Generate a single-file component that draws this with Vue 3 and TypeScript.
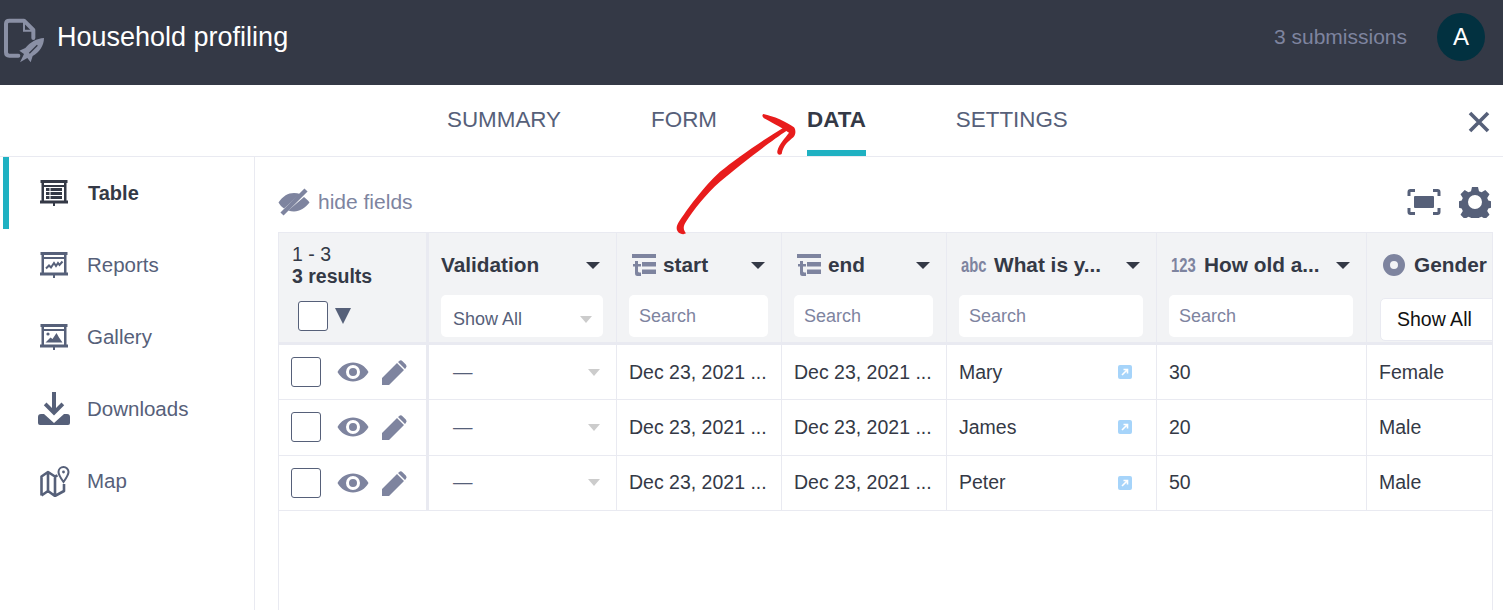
<script setup lang="ts">
const navItems = ['Table', 'Reports', 'Gallery', 'Downloads', 'Map']
const tabs = ['SUMMARY', 'FORM', 'DATA', 'SETTINGS']
const rows = [
  { name: 'Mary', age: '30', gender: 'Female' },
  { name: 'James', age: '20', gender: 'Male' },
  { name: 'Peter', age: '50', gender: 'Male' },
]
</script>

<template>
  <div class="page">
    <header class="topbar">
      <div class="brand">
        <svg class="doc" width="50" height="66" viewBox="0 10 150 198">
          <path d="M55 165H28Q18 165 18 155V70Q18 60 28 60H72L100 88V112" fill="none" stroke="#8a90a5" stroke-width="12" stroke-linejoin="round" stroke-linecap="round"/>
          <path d="M72 60V90H100" fill="none" stroke="#8a90a5" stroke-width="6"/>
          <path d="M132 112C132 135 118 155 98 166L92 185 82 172 60 185 72 160 58 150 76 142C90 125 110 113 132 112Z" fill="#8a90a5"/>
          <path d="M112 134 88 158" stroke="#343946" stroke-width="4" fill="none"/>
        </svg>
        <span class="title">Household profiling</span>
      </div>
      <div class="top-right">
        <span class="subs">3 submissions</span>
        <span class="avatar">A</span>
      </div>
    </header>

    <nav class="tabs">
      <a v-for="t in tabs" :key="t" class="tab" :class="{ on: t === 'DATA' }">{{ t }}</a>
      <svg class="close" width="22" height="22" viewBox="0 0 22 22">
        <path d="M2 2l18 18M20 2L2 20" stroke="#566079" stroke-width="3.600" fill="none"/>
      </svg>
    </nav>

    <div class="main">
      <aside class="side">
        <div v-for="n in navItems" :key="n" class="nav" :class="{ active: n === 'Table' }">
          <span class="nav-ic">
            <svg v-if="n === 'Table'" width="28" height="26" viewBox="0 0 28 26">
              <g fill="#343946">
                <path d="M0.500 0h27v3H.5zM0 20.500h28V23.500H0zM13 23h2v3h-2zM1.500 3h2.500v18H1.500zM24 3h2.500v18H24zM1.500 5h25v2h-25z"/>
                <path d="M6 8h3.500v3H6zM10.500 8H22v3H10.500zM6 12h3.500v3H6zM10.500 12H22v3H10.500zM6 16h3.500v3H6zM10.500 16H22v3H10.500z"/>
              </g>
            </svg>
            <svg v-else-if="n === 'Reports'" width="28" height="26" viewBox="0 0 28 26">
              <path fill="#566079" d="M0.500 0h27v3H.5zM0 20.500h28V23.500H0zM13 23h2v3h-2zM1.500 3h2.500v18H1.500zM24 3h2.500v18H24zM1.500 5h25v2h-25z"/>
              <path d="M6 16.500l3-3 2 2 3-4.500 2 3 2-3 1.500 2 3-3.500" fill="none" stroke="#566079" stroke-width="2"/>
            </svg>
            <svg v-else-if="n === 'Gallery'" width="28" height="26" viewBox="0 0 28 26">
              <path fill="#566079" d="M0.500 0h27v3H.5zM0 20.500h28V23.500H0zM13 23h2v3h-2zM1.500 3h2.500v18H1.500zM24 3h2.500v18H24zM1.500 5h25v2h-25z"/>
              <circle cx="8" cy="10" r="1.600" fill="#566079"/>
              <path d="M5.500 18.500l5-5 2 1.500 4-6 2.500 4.500 3.500 5z" fill="#566079"/>
            </svg>
            <svg v-else-if="n === 'Downloads'" class="dl" width="32" height="34" viewBox="0 0 32 34">
              <path d="M14 0h4v16l5.500-5.500 2.700 2.700L16 23.500 5.800 13.200l2.700-2.700L14 16z" fill="#566079"/>
              <path d="M3 22h3l10 9 10-9h3a3 3 0 0 1 3 3v6a2 2 0 0 1-2 2H2a2 2 0 0 1-2-2v-6a3 3 0 0 1 3-3z" fill="#566079"/>
            </svg>
            <svg v-else width="30" height="31" viewBox="0 0 30 31">
              <path d="M1.500 29.500V10.500L8 6l7 4.500 2.500-1.200M24 18v7l-9 5-7-5-6.500 4.500M8 6v19M15 10.500V30" fill="none" stroke="#566079" stroke-width="2.600" stroke-linejoin="round"/>
              <path d="M23.500 1a5 5 0 0 1 5 5c0 3-5 10-5 10s-5-7-5-10a5 5 0 0 1 5-5z" fill="#fff" stroke="#566079" stroke-width="2"/>
              <circle cx="23.500" cy="6" r="1.400" fill="#566079"/>
            </svg>
          </span>
          <span>{{ n }}</span>
        </div>
      </aside>

      <section class="content">
        <div class="tools">
          <div class="hide">
            <svg width="32" height="28" viewBox="0 0 32 28">
              <path d="M0.500 14.500C5 8 10 5 16 5c2.200 0 4.200 .4 6 1L6 20.500C3.800 19 2 17 .5 14.500zM26 9c2 1.400 3.800 3.200 5.500 5.500C27 20 22 23.500 16 23.500c-2 0-4-.4-5.800-1z" fill="#7e849f"/>
              <path d="M4 26L28 2" stroke="#7e849f" stroke-width="4.500" fill="none"/>
            </svg>
            <span>hide fields</span>
          </div>
          <div class="tool-icons">
            <svg width="34" height="28" viewBox="0 0 34 28">
              <path d="M8 2.500H3.500a1.500 1.500 0 0 0-1.500 1.500v4M26 2.500h4.500A1.500 1.500 0 0 1 32 4v4M8 25.500H3.500A1.500 1.500 0 0 1 2 24v-4M26 25.500h4.500a1.500 1.500 0 0 0 1.500-1.500v-4" fill="none" stroke="#566079" stroke-width="3"/>
              <rect x="7" y="8" width="20" height="12" rx="1" fill="#566079"/>
            </svg>
            <svg width="32" height="32" viewBox="0 0 32 32">
              <path fill="#566079" fill-rule="evenodd" d="M13 1h6l1 4.200 2.600 1.100 3.700-2.300 4.200 4.200-2.300 3.700 1.100 2.600 4.200 1v6l-4.200 1-1.100 2.600 2.300 3.700-4.200 4.200-3.700-2.300-2.600 1.100-1 4.200h-6l-1-4.200-2.600-1.100-3.700 2.300-4.200-4.200 2.300-3.700-1.100-2.600-4.200-1v-6l4.200-1 1.100-2.600-2.300-3.700 4.200-4.200 3.700 2.300 2.600-1.100zM16 9a7 7 0 1 0 0 14 7 7 0 0 0 0-14z"/>
            </svg>
          </div>
        </div>

        <div class="table">
          <div class="row head">
            <div class="cell first h">
              <div class="count">1 - 3<br /><b>3 results</b></div>
              <div class="selall"><span class="box"></span><span class="down-big"></span></div>
            </div>
            <div class="cell h">
              <div class="hd"><span class="hname">Validation</span><i class="car"></i></div>
              <div class="select"><span>Show All</span><i class="car light"></i></div>
            </div>
            <div class="cell h" v-for="c in ['start', 'end']" :key="c">
              <div class="hd">
                <svg class="t-ic" width="24" height="23" viewBox="0 0 24 23">
                  <path d="M0 0h24v4H0zM10 8h14v4.500H10zM10 15.500h14V20H10zM3 7h3v3h3v2.500H6V17c0 1 .5 1.500 3 1.500V22H5.500C3.500 22 3 21 3 19v-6.500H1V10h2z" fill="#7e849f"/>
                </svg>
                <span class="hname">{{ c }}</span><i class="car"></i>
              </div>
              <div class="search">Search</div>
            </div>
            <div class="cell h">
              <div class="hd"><span class="ty">abc</span><span class="hname">What is y...</span><i class="car"></i></div>
              <div class="search">Search</div>
            </div>
            <div class="cell h">
              <div class="hd"><span class="ty">123</span><span class="hname">How old a...</span><i class="car"></i></div>
              <div class="search">Search</div>
            </div>
            <div class="cell h last">
              <div class="hd">
                <svg class="radio" width="22" height="22" viewBox="0 0 22 22"><circle cx="11" cy="11" r="7.500" fill="none" stroke="#7e849f" stroke-width="7"/></svg>
                <span class="hname">Gender</span>
              </div>
              <div class="show">Show All</div>
            </div>
          </div>

          <div v-for="r in rows" :key="r.name" class="row body">
            <div class="cell first actions">
              <span class="box"></span>
              <svg width="32" height="20" viewBox="0 0 32 20">
                <path fill="#7e849f" fill-rule="evenodd" d="M0.500 10C4 4 9.500 0.500 16 0.500S28 4 31.500 10C28 16 22.500 19.500 16 19.500S4 16 .5 10zM16 3a7 7 0 1 0 0 14 7 7 0 0 0 0-14zM16 6a4 4 0 1 1 0 8 4 4 0 0 1 0-8z"/>
              </svg>
              <svg class="pen" width="28" height="28" viewBox="0 0 28 28">
                <path fill="#7e849f" d="M1 20L16 5l7 7L8 27H1zM18 3.200a2.500 2.500 0 0 1 3.500 0l3.300 3.300a2.500 2.500 0 0 1 0 3.500L24 11l-7-7z"/>
              </svg>
            </div>
            <div class="cell dash"><span>—</span><i class="car light"></i></div>
            <div class="cell">Dec 23, 2021 ...</div>
            <div class="cell">Dec 23, 2021 ...</div>
            <div class="cell name">
              <span>{{ r.name }}</span>
              <svg width="14" height="14" viewBox="0 0 14 14">
                <rect width="14" height="14" rx="2" fill="#a6d4fa"/>
                <path d="M4 10l5-5M5.500 4.500H9.500V8.500" stroke="#fff" stroke-width="1.600" fill="none"/>
              </svg>
            </div>
            <div class="cell">{{ r.age }}</div>
            <div class="cell last">{{ r.gender }}</div>
          </div>
        </div>

        <svg class="arrow" width="360" height="260" viewBox="0 0 1080 780">
          <path d="M190 433C170 430 165 415 175 398 200 360 250 290 300 245 350 205 420 155 495 110L500 122C450 155 360 225 300 275 260 310 220 360 198 395 188 410 190 420 198 430Z" fill="#e81c1c"/>
          <path d="M430 72C460 78 500 95 522 112 528 120 528 135 520 142 505 155 490 165 485 192 478 198 470 192 472 183 478 160 495 145 507 128 480 110 450 95 432 85 426 80 426 74 430 72Z" fill="#e81c1c"/>
        </svg>
      </section>
    </div>
  </div>
</template>

<style scoped>
.page {
  width: 1503px;
  height: 610px;
  overflow: hidden;
  background: #fff;
  font-family: "Liberation Sans", Arial, sans-serif;
  color: #343946;
}
.topbar {
  height: 85px;
  background: #343946;
  display: flex;
  align-items: center;
  justify-content: space-between;
  padding: 0 18px 12px 0;
  box-sizing: border-box;
}
.brand { display: flex; align-items: center; }
.doc { margin-right: 7px; flex: none; }
.title { color: #fff; font-size: 27px; margin-top: 2px; }
.top-right { display: flex; align-items: center; gap: 30px; }
.subs { color: #7e849f; font-size: 21px; }
.avatar {
  width: 48px;
  height: 48px;
  border-radius: 50%;
  background: #023140;
  color: #fff;
  font-size: 24px;
  display: flex;
  align-items: center;
  justify-content: center;
}
.tabs {
  position: relative;
  height: 72px;
  box-sizing: border-box;
  border-bottom: 1px solid #e9eaf1;
  display: flex;
  padding-left: 447px;
  gap: 90px;
}
.tab {
  color: #566079;
  font-size: 22.400px;
  height: 71px;
  padding-top: 22px;
  box-sizing: border-box;
}
.tab.on {
  color: #343946;
  font-weight: 700;
  border-bottom: 6px solid #1fb1c2;
}
.close { position: absolute; right: 13px; top: 26px; }
.main { display: flex; height: 453px; }
.side {
  width: 255px;
  box-sizing: border-box;
  border-right: 1px solid #e9eaf1;
  padding-left: 3px;
  flex: none;
}
.nav {
  height: 72px;
  display: flex;
  align-items: center;
  font-size: 20.500px;
  color: #566079;
  padding-left: 6px;
}
.nav.active {
  color: #343946;
  font-weight: 700;
  font-size: 20px;
  box-shadow: inset 6px 0 0 #1fb1c2;
}
.nav.active span + span { margin-left: 1px; }
.nav-ic {
  width: 78px;
  display: flex;
  justify-content: flex-start;
  padding-left: 31px;
  box-sizing: border-box;
}
.dl { margin-left: -2px; }
.content {
  flex: 1;
  position: relative;
  padding: 0 10px 0 23px;
  min-width: 0;
}
.tools {
  height: 75px;
  display: flex;
  align-items: center;
  justify-content: space-between;
  padding-top: 14px;
  box-sizing: border-box;
}
.hide { display: flex; align-items: center; gap: 8px; color: #7e849f; font-size: 21px; }
.tool-icons { display: flex; align-items: center; gap: 18px; margin-right: 2px; }
.table {
  border: 1px solid #e9eaf1;
  height: 400px;
  overflow: hidden;
}
.row {
  display: grid;
  grid-template-columns: 150px 188px 165px 165px 210px 210px 1fr;
}
.head {
  height: 112px;
  background: #f2f3f5;
  border-bottom: 3px solid #e9eaf1;
  box-sizing: border-box;
}
.body {
  height: 55.330px;
  border-bottom: 1px solid #e9eaf1;
  box-sizing: border-box;
}
.cell {
  border-right: 1px solid #e9eaf1;
  font-size: 19.500px;
  padding: 0 12px;
  display: flex;
  align-items: center;
  box-sizing: border-box;
  min-width: 0;
  white-space: nowrap;
  color: #343946;
}
.cell.first { border-right-width: 3px; }
.cell.last { border-right: 0; }
.h {
  flex-direction: column;
  align-items: stretch;
  padding: 16px 16px 0 12px;
  overflow: hidden;
}
.first.h { padding-left: 13px; padding-top: 10px; padding-right: 0; }
.count { font-size: 19.500px; line-height: 22px; height: 57px; }
.count b { font-size: 19.500px; }
.selall { display: flex; align-items: center; padding-left: 6px; gap: 7px; margin-top: 1px; }
.box {
  display: block;
  width: 30px;
  height: 30px;
  box-sizing: border-box;
  border: 1px solid #566079;
  border-radius: 3px;
  background: #fff;
  flex: none;
}
.down-big {
  width: 0;
  height: 0;
  border-left: 8px solid transparent;
  border-right: 8px solid transparent;
  border-top: 16px solid #566079;
}
.hd {
  height: 32px;
  display: flex;
  align-items: center;
}
.hname { font-weight: 700; font-size: 20.800px; color: #343946; }
.car {
  margin-left: auto;
  width: 0;
  height: 0;
  border-left: 7px solid transparent;
  border-right: 7px solid transparent;
  border-top: 7px solid #343946;
  flex: none;
}
.car.light {
  border-left-width: 6px;
  border-right-width: 6px;
  border-top-color: #ccc;
}
.select, .search {
  background: #fff;
  border-radius: 5px;
  height: 42px;
  margin-top: 14px;
  margin-right: -3px;
  font-size: 18px;
  display: flex;
  align-items: center;
  padding: 0 10px;
  box-sizing: border-box;
}
.select { padding: 6px 11px 0 12px; color: #566079; }
.search { color: #7e849f; }
.t-ic { margin: 0 7px 0 3px; flex: none; }
.ty {
  color: #7e849f;
  font-weight: 700;
  font-size: 20px;
  margin: 0 0 0 2px;
  transform: scaleX(.74);
  transform-origin: left;
  width: 33px;
  flex: none;
}
.radio { margin: 0 9px 0 3px; flex: none; }
.last.h { padding-left: 13px; padding-right: 0; }
.show {
  margin-top: 17px;
  height: 43px;
  width: 140px;
  background: #fff;
  border: 1px solid #e9eaf1;
  border-radius: 5px;
  color: #111;
  font-size: 19.500px;
  display: flex;
  align-items: center;
  padding-left: 16px;
  box-sizing: border-box;
}
.actions { gap: 16px; }
.pen { margin-left: -4px; }
.dash { padding-left: 24px; justify-content: space-between; padding-right: 16px; color: #566079; }
.name { justify-content: space-between; padding-right: 24px; }
.arrow {
  position: absolute;
  left: 365px;
  top: -67px;
  pointer-events: none;
}
</style>
